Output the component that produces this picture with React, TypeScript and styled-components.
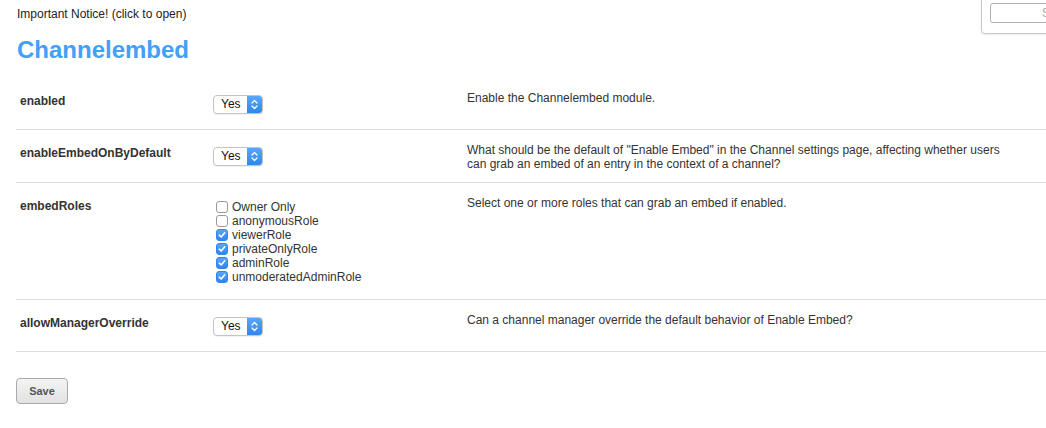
import React from "react";
import styled, { createGlobalStyle } from "styled-components";

const Global = createGlobalStyle`
  html, body { margin: 0; padding: 0; background: #fff; }
  body { font-family: "Liberation Sans", Arial, Helvetica, sans-serif; color: #333; overflow: hidden; }
`;

const Page = styled.div`
  position: relative;
  width: 1046px;
  height: 428px;
  overflow: hidden;
`;

const Notice = styled.div`
  padding: 7px 0 0 17px;
  font-size: 12px;
  line-height: 14px;
  color: #222;
  cursor: pointer;
`;

const Title = styled.h1`
  margin: 0;
  padding: 15px 0 0 17px;
  font-size: 24px;
  line-height: 28px;
  font-weight: bold;
  color: #42a0f6;
`;

const Table = styled.div`
  margin: 14px 0 0 16px;
  width: 1100px;
`;

const Row = styled.div`
  display: grid;
  grid-template-columns: 193px 254px 540px;
  padding: 13px 0 11px 4px;
  border-bottom: 1px solid #dedede;
`;

const Label = styled.div`
  padding-top: 3px;
  font-size: 12px;
  line-height: 14px;
  font-weight: bold;
  color: #333;
`;

const Desc = styled.div`
  font-size: 12px;
  line-height: 14px;
  color: #333;
`;

const Control = styled.div`
  padding-top: 3px;
  padding-bottom: 4px;
`;

const SelectBox = styled.div`
  display: inline-flex;
  align-items: stretch;
  width: 50px;
  height: 19px;
  box-sizing: border-box;
  border: 1px solid #c4c4c4;
  border-radius: 4px;
  background: #fff;
  overflow: hidden;
  box-shadow: 0 1px 1px rgba(0, 0, 0, 0.06);
`;

const SelectText = styled.span`
  flex: 1;
  padding-left: 7px;
  font-size: 12px;
  line-height: 17px;
  color: #111;
`;

const SelectArrow = styled.span`
  width: 15px;
  display: flex;
  align-items: center;
  justify-content: center;
  background: linear-gradient(#5aa6f8, #2f86ee);
`;

const Select = ({ value }: { value: string }) => (
  <SelectBox>
    <SelectText>{value}</SelectText>
    <SelectArrow>
      <svg width="7" height="11" viewBox="0 0 7 11" fill="none" stroke="#fff" strokeWidth="1.3" strokeLinecap="round" strokeLinejoin="round">
        <path d="M1 4 L3.5 1.5 L6 4" />
        <path d="M1 7 L3.5 9.5 L6 7" />
      </svg>
    </SelectArrow>
  </SelectBox>
);

const CheckList = styled.div`
  display: flex;
  flex-direction: column;
  padding-left: 3px;
  padding-top: 1px;
`;

const CheckRow = styled.label`
  display: flex;
  align-items: center;
  height: 14px;
  font-size: 12px;
  color: #333;
`;

const Box = styled.span<{ $checked: boolean }>`
  width: 12px;
  height: 12px;
  box-sizing: border-box;
  margin-right: 4px;
  border-radius: 3px;
  display: inline-flex;
  align-items: center;
  justify-content: center;
  border: 1px solid ${(p) => (p.$checked ? "#2f86ee" : "#9a9a9a")};
  background: ${(p) => (p.$checked ? "linear-gradient(#5aa6f8, #2f86ee)" : "#fff")};
`;

const Check = ({ checked, label }: { checked: boolean; label: string }) => (
  <CheckRow>
    <Box $checked={checked}>
      {checked && (
        <svg width="8" height="8" viewBox="0 0 8 8" fill="none" stroke="#fff" strokeWidth="1.6" strokeLinecap="round" strokeLinejoin="round">
          <path d="M1.3 4.2 L3.2 6 L6.7 1.8" />
        </svg>
      )}
    </Box>
    {label}
  </CheckRow>
);

const Footer = styled.div`
  padding: 26px 0 0 16px;
`;

const SaveButton = styled.button`
  width: 52px;
  height: 26px;
  border: 1px solid #a9a9a9;
  border-radius: 4px;
  background: linear-gradient(#f4f4f4, #e2e2e2);
  font-family: "Liberation Sans", Arial, sans-serif;
  font-size: 11px;
  font-weight: bold;
  color: #555;
  padding: 0;
`;

const SearchPanel = styled.div`
  position: absolute;
  top: -6px;
  left: 981px;
  width: 100px;
  height: 38px;
  border: 1px solid #c8c8c8;
  border-radius: 4px;
  background: #fff;
  box-shadow: 0 1px 2px rgba(0, 0, 0, 0.08);
`;

const SearchInput = styled.div`
  position: absolute;
  top: 8px;
  left: 8px;
  width: 120px;
  height: 20px;
  border: 1px solid #b0b0b0;
  border-radius: 3px;
  box-sizing: border-box;
  font-size: 12px;
  line-height: 18px;
  padding-left: 51px;
  color: #aaa;
`;

const roles: [string, boolean][] = [
  ["Owner Only", false],
  ["anonymousRole", false],
  ["viewerRole", true],
  ["privateOnlyRole", true],
  ["adminRole", true],
  ["unmoderatedAdminRole", true],
];

export default function App() {
  return (
    <Page>
      <Global />
      <Notice>Important Notice! (click to open)</Notice>
      <Title>Channelembed</Title>
      <Table>
        <Row>
          <Label>enabled</Label>
          <Control>
            <Select value="Yes" />
          </Control>
          <Desc>Enable the Channelembed module.</Desc>
        </Row>
        <Row>
          <Label>enableEmbedOnByDefault</Label>
          <Control>
            <Select value="Yes" />
          </Control>
          <Desc>
            What should be the default of "Enable Embed" in the Channel settings page, affecting whether users can grab
            an embed of an entry in the context of a channel?
          </Desc>
        </Row>
        <Row>
          <Label>embedRoles</Label>
          <Control>
            <CheckList>
              {roles.map(([r, c]) => (
                <Check key={r} label={r} checked={c} />
              ))}
            </CheckList>
          </Control>
          <Desc>Select one or more roles that can grab an embed if enabled.</Desc>
        </Row>
        <Row>
          <Label>allowManagerOverride</Label>
          <Control>
            <Select value="Yes" />
          </Control>
          <Desc>Can a channel manager override the default behavior of Enable Embed?</Desc>
        </Row>
      </Table>
      <Footer>
        <SaveButton>Save</SaveButton>
      </Footer>
      <SearchPanel>
        <SearchInput>Search</SearchInput>
      </SearchPanel>
    </Page>
  );
}
